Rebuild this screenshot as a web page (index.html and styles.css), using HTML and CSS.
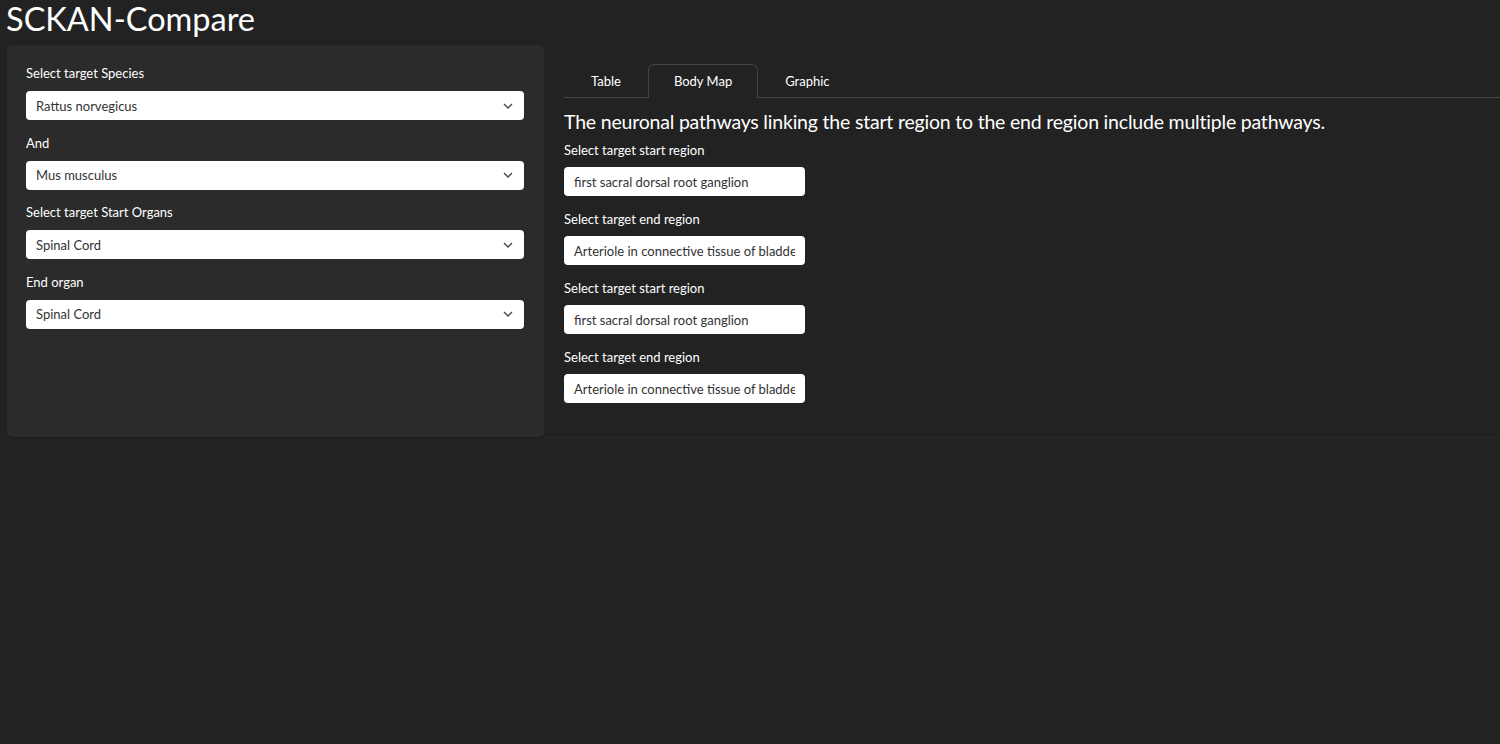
FILE: index.html
```html
<!DOCTYPE html>
<html lang="en">
<head>
<meta charset="utf-8">
<title>SCKAN-Compare</title>
<link rel="stylesheet" href="styles.css">
</head>
<body>
<h1 class="app-title">SCKAN-Compare</h1>
<div class="layout">
  <aside class="sidebar">
    <div class="field">
      <label class="field-label">Select target Species</label>
      <div class="select"><span>Rattus norvegicus</span><svg class="chev" viewBox="0 0 10 6" width="10" height="6"><path d="M1 1l4 4 4-4" fill="none" stroke="#444" stroke-width="1.3"/></svg></div>
    </div>
    <div class="field">
      <label class="field-label">And</label>
      <div class="select"><span>Mus musculus</span><svg class="chev" viewBox="0 0 10 6" width="10" height="6"><path d="M1 1l4 4 4-4" fill="none" stroke="#444" stroke-width="1.3"/></svg></div>
    </div>
    <div class="field">
      <label class="field-label">Select target Start Organs</label>
      <div class="select"><span>Spinal Cord</span><svg class="chev" viewBox="0 0 10 6" width="10" height="6"><path d="M1 1l4 4 4-4" fill="none" stroke="#444" stroke-width="1.3"/></svg></div>
    </div>
    <div class="field">
      <label class="field-label">End organ</label>
      <div class="select"><span>Spinal Cord</span><svg class="chev" viewBox="0 0 10 6" width="10" height="6"><path d="M1 1l4 4 4-4" fill="none" stroke="#444" stroke-width="1.3"/></svg></div>
    </div>
  </aside>
  <main class="main">
    <ul class="tabs">
      <li class="tab">Table</li>
      <li class="tab active">Body Map</li>
      <li class="tab">Graphic</li>
    </ul>
    <h3 class="summary">The neuronal pathways linking the start region to the end region include multiple pathways.</h3>
    <div class="field">
      <label class="field-label">Select target start region</label>
      <input class="text-input" type="text" value="first sacral dorsal root ganglion" readonly>
    </div>
    <div class="field">
      <label class="field-label">Select target end region</label>
      <input class="text-input" type="text" value="Arteriole in connective tissue of bladder dome" readonly>
    </div>
    <div class="field">
      <label class="field-label">Select target start region</label>
      <input class="text-input" type="text" value="first sacral dorsal root ganglion" readonly>
    </div>
    <div class="field">
      <label class="field-label">Select target end region</label>
      <input class="text-input" type="text" value="Arteriole in connective tissue of bladder dome" readonly>
    </div>
  </main>
</div>
</body>
</html>
```

FILE: styles.css
```css
* { box-sizing: border-box; }
html, body { margin: 0; padding: 0; }
body {
  background: #222222;
  color: #ffffff;
  font-family: Lato, "Noto Sans", sans-serif;
  font-size: 13px;
  width: 1500px;
  height: 744px;
  overflow: hidden;
}
.app-title {
  margin: 0;
  padding: 0 0 0 6px;
  font-size: 32.5px;
  font-weight: 400;
  line-height: 38px;
  height: 45px;
}
.layout {
  display: flex;
  align-items: stretch;
  padding-left: 7px;
}
.sidebar {
  width: 537px;
  height: 392px;
  background: #2b2b2b;
  border-radius: 5px;
  padding: 18px 20px 0 19px;
  box-shadow: 0 1px 1px rgba(0,0,0,0.15);
}
.main {
  flex: 1;
  padding: 19px 0 0 20px;
  border-bottom: 1px solid #2a2a2a;
  height: 393px;
}
.field { margin-bottom: 12.5px; }
.field-label {
  display: block;
  line-height: 20px;
  height: 20px;
  margin-bottom: 8px;
  font-size: 13px;
  color: #ffffff;
}
.select {
  height: 29px;
  background: #ffffff;
  border-radius: 4px;
  display: flex;
  align-items: center;
  justify-content: space-between;
  padding: 0 10px 0 10px;
  color: #333333;
  font-size: 13px;
}
.chev { margin-right: 1px; }
.tabs {
  list-style: none;
  margin: 0;
  padding: 0;
  display: flex;
  height: 34px;
  border-bottom: 1px solid #444444;
}
.tab {
  padding: 0 26px;
  height: 34px;
  line-height: 33px;
  font-size: 13px;
  color: #ffffff;
  border: 1px solid transparent;
  border-bottom: none;
}
.tab.active {
  border-color: #444444;
  border-radius: 6px 6px 0 0;
  background: #222222;
  height: 34px;
  margin-bottom: -1px;
  padding: 0 25px;
}
.summary {
  margin: 12px 0 6px;
  font-size: 19.5px;
  letter-spacing: -0.2px;
  font-weight: 400;
  line-height: 24px;
}
.main .field-label { margin-bottom: 7px; }
.main .field { margin-bottom: 13px; }
.text-input {
  display: block;
  width: 241px;
  height: 29px;
  border: none;
  border-radius: 4px;
  background: #ffffff;
  padding: 0 10px;
  font-family: Lato, "Noto Sans", sans-serif;
  font-size: 13px;
  color: #333333;
  outline: none;
}
```
